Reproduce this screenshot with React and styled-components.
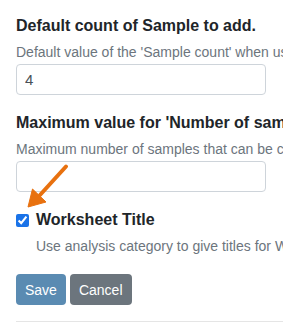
import React from "react";
import styled, { createGlobalStyle } from "styled-components";

const Global = createGlobalStyle`
  html, body { margin: 0; padding: 0; background: #fff; }
  body { font-family: "Liberation Sans", Arial, sans-serif; overflow: hidden; }
`;

const Page = styled.div`
  position: relative;
  width: 283px;
  height: 325px;
  overflow: hidden;
  padding: 16px 0 0 16px;
  box-sizing: border-box;
`;

const Field = styled.div`
  display: flex;
  flex-direction: column;
  margin-bottom: 18px;
`;

const Heading = styled.label`
  display: block;
  font-size: 16px;
  line-height: 20px;
  font-weight: bold;
  color: #212529;
  white-space: nowrap;
  margin-bottom: 6px;
`;

const Help = styled.div`
  font-size: 14px;
  line-height: 20px;
  color: #6c757d;
  white-space: nowrap;
  margin-bottom: 2px;
  padding-left: ${(p) => (p.$indent ? "20px" : "0")};
`;

const Input = styled.input`
  box-sizing: border-box;
  width: 250px;
  height: 31px;
  border: 1px solid #ced4da;
  border-radius: 4px;
  padding: 0 8px;
  font-family: "Liberation Sans", Arial, sans-serif;
  font-size: 15px;
  color: #495057;
  outline: none;
`;

const CheckRow = styled.div`
  display: flex;
  align-items: center;
  gap: 7px;
  margin-bottom: 6px;
`;

const Check = styled.input`
  width: 13px;
  height: 13px;
  margin: 0;
  accent-color: #1a73e8;
`;

const CheckLabel = styled.span`
  font-size: 16px;
  line-height: 20px;
  font-weight: bold;
  color: #212529;
`;

const Buttons = styled.div`
  display: flex;
  gap: 4px;
  margin-top: 18px;
`;

const Button = styled.button`
  height: 31px;
  padding: 0 9px;
  border: none;
  border-radius: 4px;
  font-family: "Liberation Sans", Arial, sans-serif;
  font-size: 14px;
  color: #fff;
  background: ${(p) => (p.$variant === "primary" ? "#5a8bb2" : "#6c757d")};
`;

const Rule = styled.hr`
  margin: 16px 0 0 0;
  border: none;
  border-top: 1px solid #e5e5e5;
`;

const Arrow = styled.svg`
  position: absolute;
  left: 0;
  top: 0;
  pointer-events: none;
`;

export default function App() {
  return (
    <>
      <Global />
      <Page>
        <Field>
          <Heading>Default count of Sample to add.</Heading>
          <Help>Default value of the 'Sample count' when used to add samples</Help>
          <Input defaultValue="4" />
        </Field>
        <Field>
          <Heading>Maximum value for 'Number of samples'</Heading>
          <Help>Maximum number of samples that can be created</Help>
          <Input defaultValue="" />
        </Field>
        <CheckRow>
          <Check type="checkbox" defaultChecked />
          <CheckLabel>Worksheet Title</CheckLabel>
        </CheckRow>
        <Help $indent>Use analysis category to give titles for Worksheets</Help>
        <Buttons>
          <Button $variant="primary">Save</Button>
          <Button>Cancel</Button>
        </Buttons>
        <Rule />
        <Arrow width="283" height="325" viewBox="0 0 283 325">
          <line x1="66" y1="166.5" x2="40" y2="195" stroke="#e8710f" strokeWidth="4" strokeLinecap="round" />
          <polygon points="28,207 32.5,189 46,202" fill="#e8710f" stroke="#e8710f" strokeWidth="1" strokeLinejoin="round" />
        </Arrow>
      </Page>
    </>
  );
}
